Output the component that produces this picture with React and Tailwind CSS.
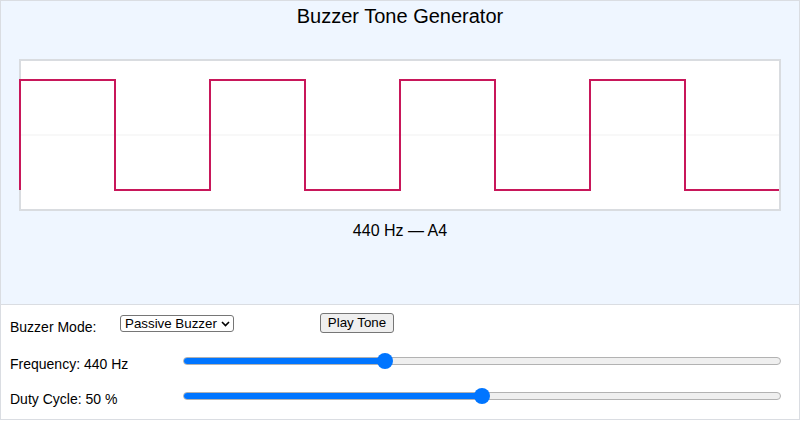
import React from "react";

function Slider({ value, min, max }) {
  const width = 598;
  const r = 8;
  const p = (value - min) / (max - min);
  const center = r + (width - 2 * r) * p;
  return (
    <div className="relative w-[598px] h-[16px] flex items-center">
      <div className="relative w-full h-[8px] rounded-full bg-[#efefef] border border-[#b2b2b2] overflow-hidden">
        <div className="absolute left-0 top-[-1px] bottom-[-1px] bg-[#0075ff]" style={{ width: center }} />
      </div>
      <div
        className="absolute top-0 w-[16px] h-[16px] rounded-full bg-[#0075ff]"
        style={{ left: center - r }}
      />
    </div>
  );
}

export default function App() {
  const wave =
    "M -1 129 V 19 H 94 V 129 H 189 V 19 H 284 V 129 H 379 V 19 H 474 V 129 H 569 V 19 H 664 V 129 H 758";
  return (
    <div className="w-[800px] h-[422px] bg-white text-black font-['Liberation_Sans',Arial,sans-serif]">
      <div className="h-[305px] border border-[#dadde2] bg-[#eff6ff] flex flex-col items-center">
        <h1 className="mt-[3px] text-[20px] leading-[24px] font-normal">Buzzer Tone Generator</h1>
        <div className="mt-[31px] w-[762px] h-[152px] border-2 border-[#d9dce0] bg-white">
          <svg width="758" height="148" viewBox="0 0 758 148" className="block overflow-visible">
            <line x1="0" y1="74" x2="758" y2="74" stroke="#f1f1f1" strokeWidth="1" />
            <path d={wave} fill="none" stroke="#c8175a" strokeWidth="2" />
          </svg>
        </div>
        <div className="mt-[10px] text-[16px] leading-[20px]">440 Hz — A4</div>
      </div>
      <div className="h-[115px] border border-t-0 border-[#dadde2] bg-white px-[9px] pt-[8px]">
        <div className="flex items-start h-[20px]">
          <div className="w-[110px] mt-[4px] text-[14px] leading-[20px]">Buzzer Mode:</div>
          <div className="mt-[2px] h-[17px] w-[114px] border border-[#767676] rounded-[3px] bg-white flex items-center justify-between pl-[4px] pr-[3px] text-[13.33px] leading-[15px]">
            <span>Passive Buzzer</span>
            <svg width="9" height="6" viewBox="0 0 9 6" className="block">
              <path d="M1 1 L4.5 4.5 L8 1" fill="none" stroke="#000" strokeWidth="1.6" />
            </svg>
          </div>
          <button className="ml-[86px] h-[20px] w-[74px] border border-[#767676] rounded-[3px] bg-[#efefef] text-[13.33px] leading-[18px] text-black">
            Play Tone
          </button>
        </div>
        <div className="flex items-start mt-[20px] h-[20px]">
          <div className="w-[173px] mt-[1px] text-[14px] leading-[20px]">Frequency: 440 Hz</div>
          <Slider value={440} min={100} max={1120} />
        </div>
        <div className="flex items-start mt-[15px] h-[20px]">
          <div className="w-[173px] mt-[1px] text-[14px] leading-[20px]">Duty Cycle: 50 %</div>
          <Slider value={50} min={0} max={100} />
        </div>
      </div>
    </div>
  );
}
